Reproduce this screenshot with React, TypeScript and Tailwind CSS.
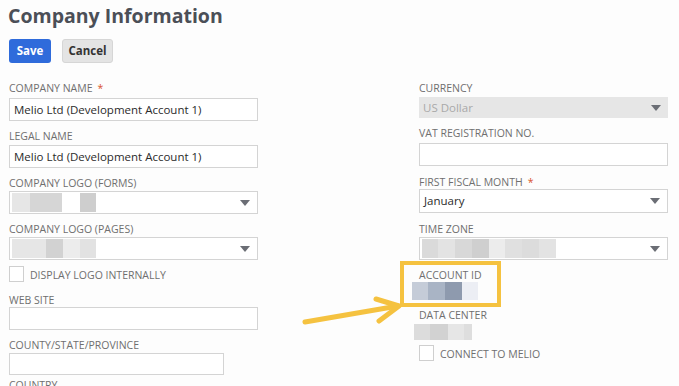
import React from "react";

const font = { fontFamily: '"Open Sans", "Noto Sans", sans-serif' };

function Caret() {
  return (
    <svg width="10" height="6" viewBox="0 0 10 6" className="shrink-0">
      <path d="M0 0 H10 L5 6 Z" fill="#6b6e75" />
    </svg>
  );
}

function Label({ children, req }: { children: React.ReactNode; req?: boolean }) {
  return (
    <div className="h-[14px] leading-[14px] text-[10.5px] text-[#6f6f6f] uppercase whitespace-nowrap">
      {children}
      {req && <span className="ml-[5px] text-[#d9532b]">*</span>}
    </div>
  );
}

function Blocks({ items, h }: { items: [number, string][]; h: string }) {
  return (
    <div className={`flex ${h}`}>
      {items.map(([w, c], i) => (
        <div key={i} style={{ width: w, background: c }} />
      ))}
    </div>
  );
}

function Input({ value, w = "w-[249px]", h = "h-[23px]" }: { value?: string; w?: string; h?: string }) {
  return (
    <div className={`${w} ${h} border border-[#d4d4d4] bg-white flex items-center px-[4px] text-[11.5px] text-[#2b2b2b] whitespace-nowrap`}>
      {value}
    </div>
  );
}

function Select({ children, disabled, h = "h-[23px]" }: { children?: React.ReactNode; disabled?: boolean; h?: string }) {
  return (
    <div
      className={`w-[249px] ${h} flex items-center justify-between pl-[2px] pr-[7px] text-[11.5px] whitespace-nowrap ${
        disabled ? "bg-[#e6e6e6] text-[#a9a9a9]" : "border border-[#d4d4d4] bg-white text-[#2b2b2b]"
      }`}
    >
      <div className="flex items-center">{children}</div>
      <Caret />
    </div>
  );
}

function Checkbox({ label }: { label: string }) {
  return (
    <div className="flex items-center gap-[6px]">
      <div className="w-[15px] h-[16px] border border-[#cfcfcf] bg-white" />
      <div className="text-[10.5px] text-[#6f6f6f] uppercase mt-[4px]">{label}</div>
    </div>
  );
}

export default function App() {
  return (
    <div className="relative w-[679px] h-[386px] overflow-hidden bg-[#fdfdfd]" style={font}>
      <div className="pl-[8px] pt-[1px]">
        <h1 className="text-[19.5px] leading-[30px] font-bold text-[#4b4f57]">Company Information</h1>
        <div className="flex gap-[11px] mt-[8px] ml-[1px]">
          <button className="w-[42px] h-[24px] rounded-[3px] bg-[#2f6bdb] text-white text-[11.5px] font-bold">Save</button>
          <button className="w-[51px] h-[24px] rounded-[3px] bg-[#e4e4e4] border border-[#d6d6d6] text-[#333] text-[11.5px] font-bold">
            Cancel
          </button>
        </div>
      </div>

      <div className="flex mt-[18px] pl-[9px] gap-[161px]">
        {/* left column */}
        <div className="flex flex-col w-[249px]">
          <Label req>Company Name</Label>
          <div className="mt-[3px]" />
          <Input value="Melio Ltd (Development Account 1)" />
          <div className="mt-[8px]" />
          <Label>Legal Name</Label>
          <div className="mt-[2px]" />
          <Input value="Melio Ltd (Development Account 1)" />
          <div className="mt-[8px]" />
          <Label>Company Logo (Forms)</Label>
          <div className="mt-[1px]" />
          <Select>
            <Blocks
              h="h-[19px]"
              items={[
                [18, "#e6e6e6"],
                [32, "#d6d6d6"],
                [18, "#ffffff"],
                [16, "#cecece"],
              ]}
            />
          </Select>
          <div className="mt-[8px]" />
          <Label>Company Logo (Pages)</Label>
          <div className="mt-[1px]" />
          <Select>
            <Blocks
              h="h-[19px]"
              items={[
                [34, "#e6e6e6"],
                [17, "#d2d2d2"],
                [17, "#ececec"],
                [16, "#e2e2e2"],
              ]}
            />
          </Select>
          <div className="mt-[4px]" />
          <Checkbox label="Display Logo Internally" />
          <div className="mt-[9px]" />
          <Label>Web Site</Label>
          <div className="mt-[0px]" />
          <Input />
          <div className="mt-[8px]" />
          <Label>County/State/Province</Label>
          <div className="mt-[1px]" />
          <Input w="w-[215px]" h="h-[22px]" />
          <div className="mt-[3px]" />
          <Label>Country</Label>
        </div>

        {/* right column */}
        <div className="flex flex-col w-[249px]">
          <Label>Currency</Label>
          <div className="mt-[2px]" />
          <Select disabled h="h-[21px]">
            <span className="pl-[2px]">US Dollar</span>
          </Select>
          <div className="mt-[8px]" />
          <Label>VAT Registration No.</Label>
          <div className="mt-[3px]" />
          <Input />
          <div className="mt-[9px]" />
          <Label req>First Fiscal Month</Label>
          <div className="mt-[0px]" />
          <Select h="h-[24px]">
            <span className="pl-[2px]">January</span>
          </Select>
          <div className="mt-[9px]" />
          <Label>Time Zone</Label>
          <div className="mt-[1px]" />
          <Select>
            <Blocks
              h="h-[19px]"
              items={[
                [16, "#dadada"],
                [17, "#e3e3e3"],
                [17, "#d8d8d8"],
                [17, "#cfcfcf"],
                [16, "#ececec"],
                [17, "#e0e0e0"],
                [17, "#dcdcdc"],
                [17, "#e3e3e3"],
              ]}
            />
          </Select>
          <div className="mt-[8px]" />
          <Label>Account ID</Label>
          <div className="ml-[-7px]">
            <Blocks
              h="h-[18px]"
              items={[
                [16, "#c5ccd8"],
                [17, "#a9b4c5"],
                [17, "#8e9aae"],
                [16, "#eceef4"],
              ]}
            />
          </div>
          <div className="mt-[8px]" />
          <Label>Data Center</Label>
          <div className="ml-[-5px] mt-[2px]">
            <Blocks
              h="h-[16px]"
              items={[
                [16, "#dcdcdc"],
                [18, "#d2d2d2"],
                [16, "#e6e6e6"],
                [8, "#dedede"],
              ]}
            />
          </div>
          <div className="mt-[3px]" />
          <Checkbox label="Connect to Melio" />
        </div>
      </div>

      {/* annotation overlay */}
      <svg className="absolute left-0 top-0 pointer-events-none" width="679" height="386" viewBox="0 0 679 386">
        <rect x="402" y="263" width="97" height="42" fill="none" stroke="#f5c240" strokeWidth="4" />
        <path d="M305 322 L398 306" stroke="#f5c240" strokeWidth="5" strokeLinecap="round" fill="none" />
        <path d="M376 299 L399 306 L379 321" stroke="#f5c240" strokeWidth="5" strokeLinecap="round" strokeLinejoin="round" fill="none" />
      </svg>
    </div>
  );
}
